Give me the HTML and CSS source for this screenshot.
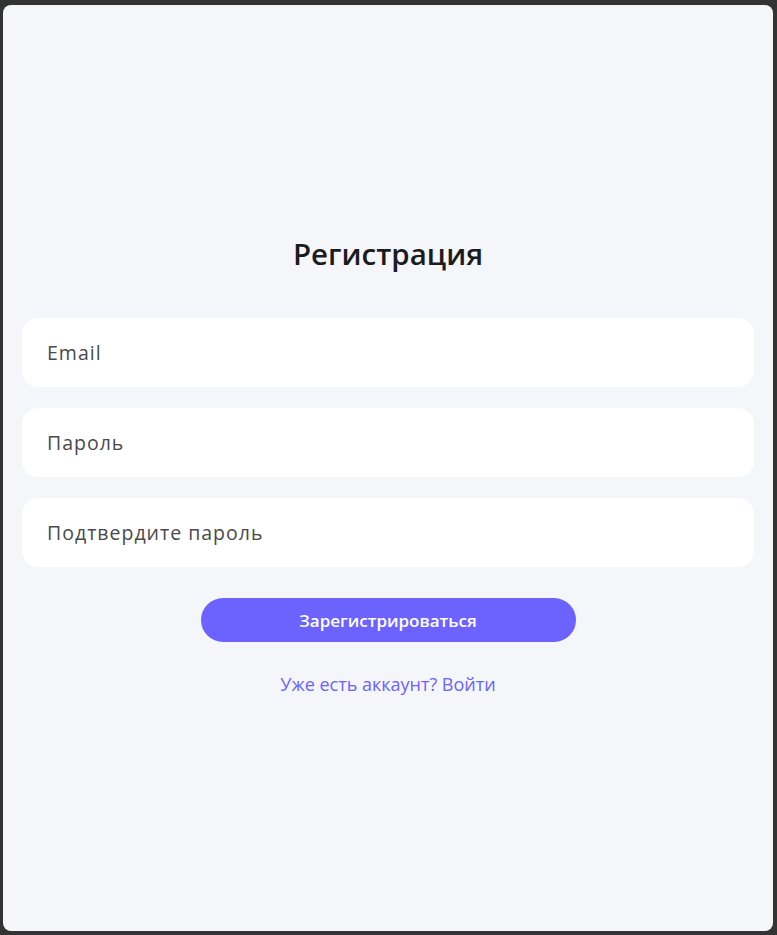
FILE: index.html
```html
<!DOCTYPE html>
<html lang="ru">
<head>
<meta charset="utf-8">
<link rel="stylesheet" href="styles.css">
</head>
<body>
<main class="panel">
  <form class="form">
    <h1 class="title">Регистрация</h1>
    <input class="field" type="email" placeholder="Email">
    <input class="field" type="password" placeholder="Пароль">
    <input class="field" type="password" placeholder="Подтвердите пароль">
    <button class="btn" type="button">Зарегистрироваться</button>
    <a class="link" href="#">Уже есть аккаунт? Войти</a>
  </form>
</main>
</body>
</html>
```

FILE: styles.css
```css
html, body {
  margin: 0;
  height: 100%;
}
body {
  background: #333333;
  padding: 5px 4px 4px 3px;
  box-sizing: border-box;
  font-family: "Open Sans", "Noto Sans", sans-serif;
}
.panel {
  height: 100%;
  background: #f5f6fa;
  border-radius: 8px;
  display: flex;
  align-items: center;
  justify-content: center;
  padding: 0 19px 6px;
  box-sizing: border-box;
}
.form {
  width: 100%;
  display: flex;
  flex-direction: column;
  align-items: center;
}
.title {
  margin: 0 0 44px;
  font-size: 29.5px;
  font-weight: 600;
  color: #1c1c1e;
  line-height: 40px;
}
.field {
  width: 100%;
  height: 69px;
  box-sizing: border-box;
  border: none;
  outline: none;
  border-radius: 16px;
  background: #ffffff;
  padding: 0 25px;
  font-family: inherit;
  font-size: 19.5px;
  letter-spacing: 1px;
  color: #444;
  margin-bottom: 21px;
}
.field::placeholder {
  color: #4a4a4a;
  opacity: 1;
}
.btn {
  margin-top: 10px;
  width: 375px;
  height: 44px;
  border: none;
  border-radius: 22px;
  background: #6c63ff;
  color: #ffffff;
  font-family: inherit;
  font-size: 17px;
  font-weight: 600;
}
.link {
  margin-top: 30px;
  font-size: 18px;
  color: #6c63ff;
  text-decoration: none;
  line-height: 24px;
}
```
